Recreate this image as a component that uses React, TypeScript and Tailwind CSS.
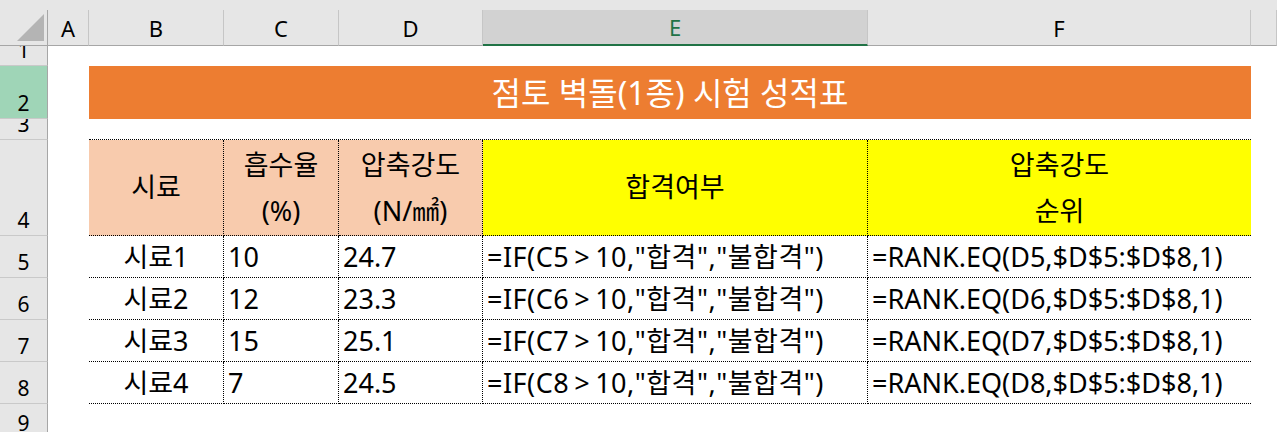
import React from "react";

const FONT = "font-['Noto_Sans','Noto_Sans_CJK_KR',sans-serif]";
const COLS = "grid grid-cols-[48px_41px_135px_115px_144px_385px_383px_1fr]";

const colHeads = ["A", "B", "C", "D", "E", "F", ""];

const RowHead = ({ n, selected }: { n: number; selected?: boolean }) => (
  <div
    className={`flex items-end justify-center overflow-hidden border-r border-b border-r-[#a6a6a6] border-b-[#c9c9c9] pb-[4px] text-[21px] leading-[21px] text-black ${
      selected ? "bg-[#9fd5b7]" : "bg-[#e6e6e6]"
    }`}
  >
    {n}
  </div>
);

const Blank = () => <div className="bg-white" />;

const dataRows = [
  ["시료1", "10", "24.7", "C5", "D5"],
  ["시료2", "12", "23.3", "C6", "D6"],
  ["시료3", "15", "25.1", "C7", "D7"],
  ["시료4", "7", "24.5", "C8", "D8"],
];

const dot = "border-dotted border-black";

export default function App() {
  return (
    <div className={`w-[1277px] h-[432px] overflow-hidden bg-white ${FONT}`}>
      {/* column headers */}
      <div className="h-[10px] bg-[#e6e6e6]" />
      <div className={`${COLS} h-[35px] bg-[#e6e6e6]`}>
        <div className="relative border-r border-b border-r-[#a6a6a6] border-b-[#a6a6a6]">
          <svg className="absolute left-[17px] top-[4px]" width="27" height="27" viewBox="0 0 27 27">
            <polygon points="27,0 27,27 0,27" fill="#b4b4b4" />
          </svg>
        </div>
        {colHeads.map((c) =>
          c === "E" ? (
            <div
              key={c}
              className="flex items-center justify-center border-r border-r-[#c6c6c6] border-b-2 border-b-[#217346] bg-[#d2d2d2] pt-[1px] text-[22px] text-[#217346]"
            >
              {c}
            </div>
          ) : (
            <div
              key={c || "g"}
              className="flex items-center justify-center border-r border-b border-r-[#c6c6c6] border-b-[#a6a6a6] pt-[1px] text-[22px] text-black"
            >
              {c}
            </div>
          )
        )}
      </div>

      {/* sheet body */}
      <div className={`${COLS} grid-rows-[21px_53px_21px_96px_42px_42px_42px_42px_35px] text-[27px] text-black`}>
        {/* row 1 */}
        <RowHead n={1} />
        <div className="col-span-7" />

        {/* row 2 */}
        <RowHead n={2} selected />
        <Blank />
        <div className="col-span-5 flex items-center justify-center bg-[#ed7d31] text-[32px] leading-none text-white">
          점토 벽돌(1종) 시험 성적표
        </div>
        <Blank />

        {/* row 3 */}
        <RowHead n={3} />
        <Blank />
        <div className={`col-span-5 border-b ${dot}`} />
        <Blank />

        {/* row 4 */}
        <RowHead n={4} />
        <Blank />
        <div className={`flex items-center justify-center bg-[#f8cbad] border-r border-b ${dot}`}>시료</div>
        <div className={`flex flex-col items-center justify-center bg-[#f8cbad] border-r border-b leading-[46px] ${dot}`}>
          <span>흡수율</span>
          <span>(%)</span>
        </div>
        <div className={`flex flex-col items-center justify-center bg-[#f8cbad] border-r border-b leading-[46px] ${dot}`}>
          <span>압축강도</span>
          <span>(N/㎟)</span>
        </div>
        <div className={`flex items-center justify-center bg-[#ffff00] border-r border-b ${dot}`}>합격여부</div>
        <div className={`flex flex-col items-center justify-center bg-[#ffff00] border-b leading-[46px] ${dot}`}>
          <span>압축강도</span>
          <span>순위</span>
        </div>
        <Blank />

        {/* rows 5-8 */}
        {dataRows.map(([name, absorb, strength, c, d], i) => (
          <React.Fragment key={name}>
            <RowHead n={i + 5} />
            <Blank />
            <div className={`flex items-center justify-center border-r border-b pt-[2px] ${dot}`}>{name}</div>
            <div className={`flex items-center border-r border-b pl-[4px] pt-[2px] ${dot}`}>{absorb}</div>
            <div className={`flex items-center border-r border-b pl-[4px] pt-[2px] ${dot}`}>{strength}</div>
            <div className={`flex items-center border-r border-b pl-[4px] pt-[2px] whitespace-nowrap tracking-[0.5px] ${dot}`}>
              =IF({c}&thinsp;&gt;&thinsp;10,"합격","불합격")
            </div>
            <div className={`flex items-center border-b pl-[4px] pt-[2px] whitespace-nowrap ${dot}`}>
              =RANK.EQ({d},$D$5:$D$8,1)
            </div>
            <Blank />
          </React.Fragment>
        ))}

        {/* row 9 */}
        <RowHead n={9} />
        <div className="col-span-7" />
      </div>
    </div>
  );
}
